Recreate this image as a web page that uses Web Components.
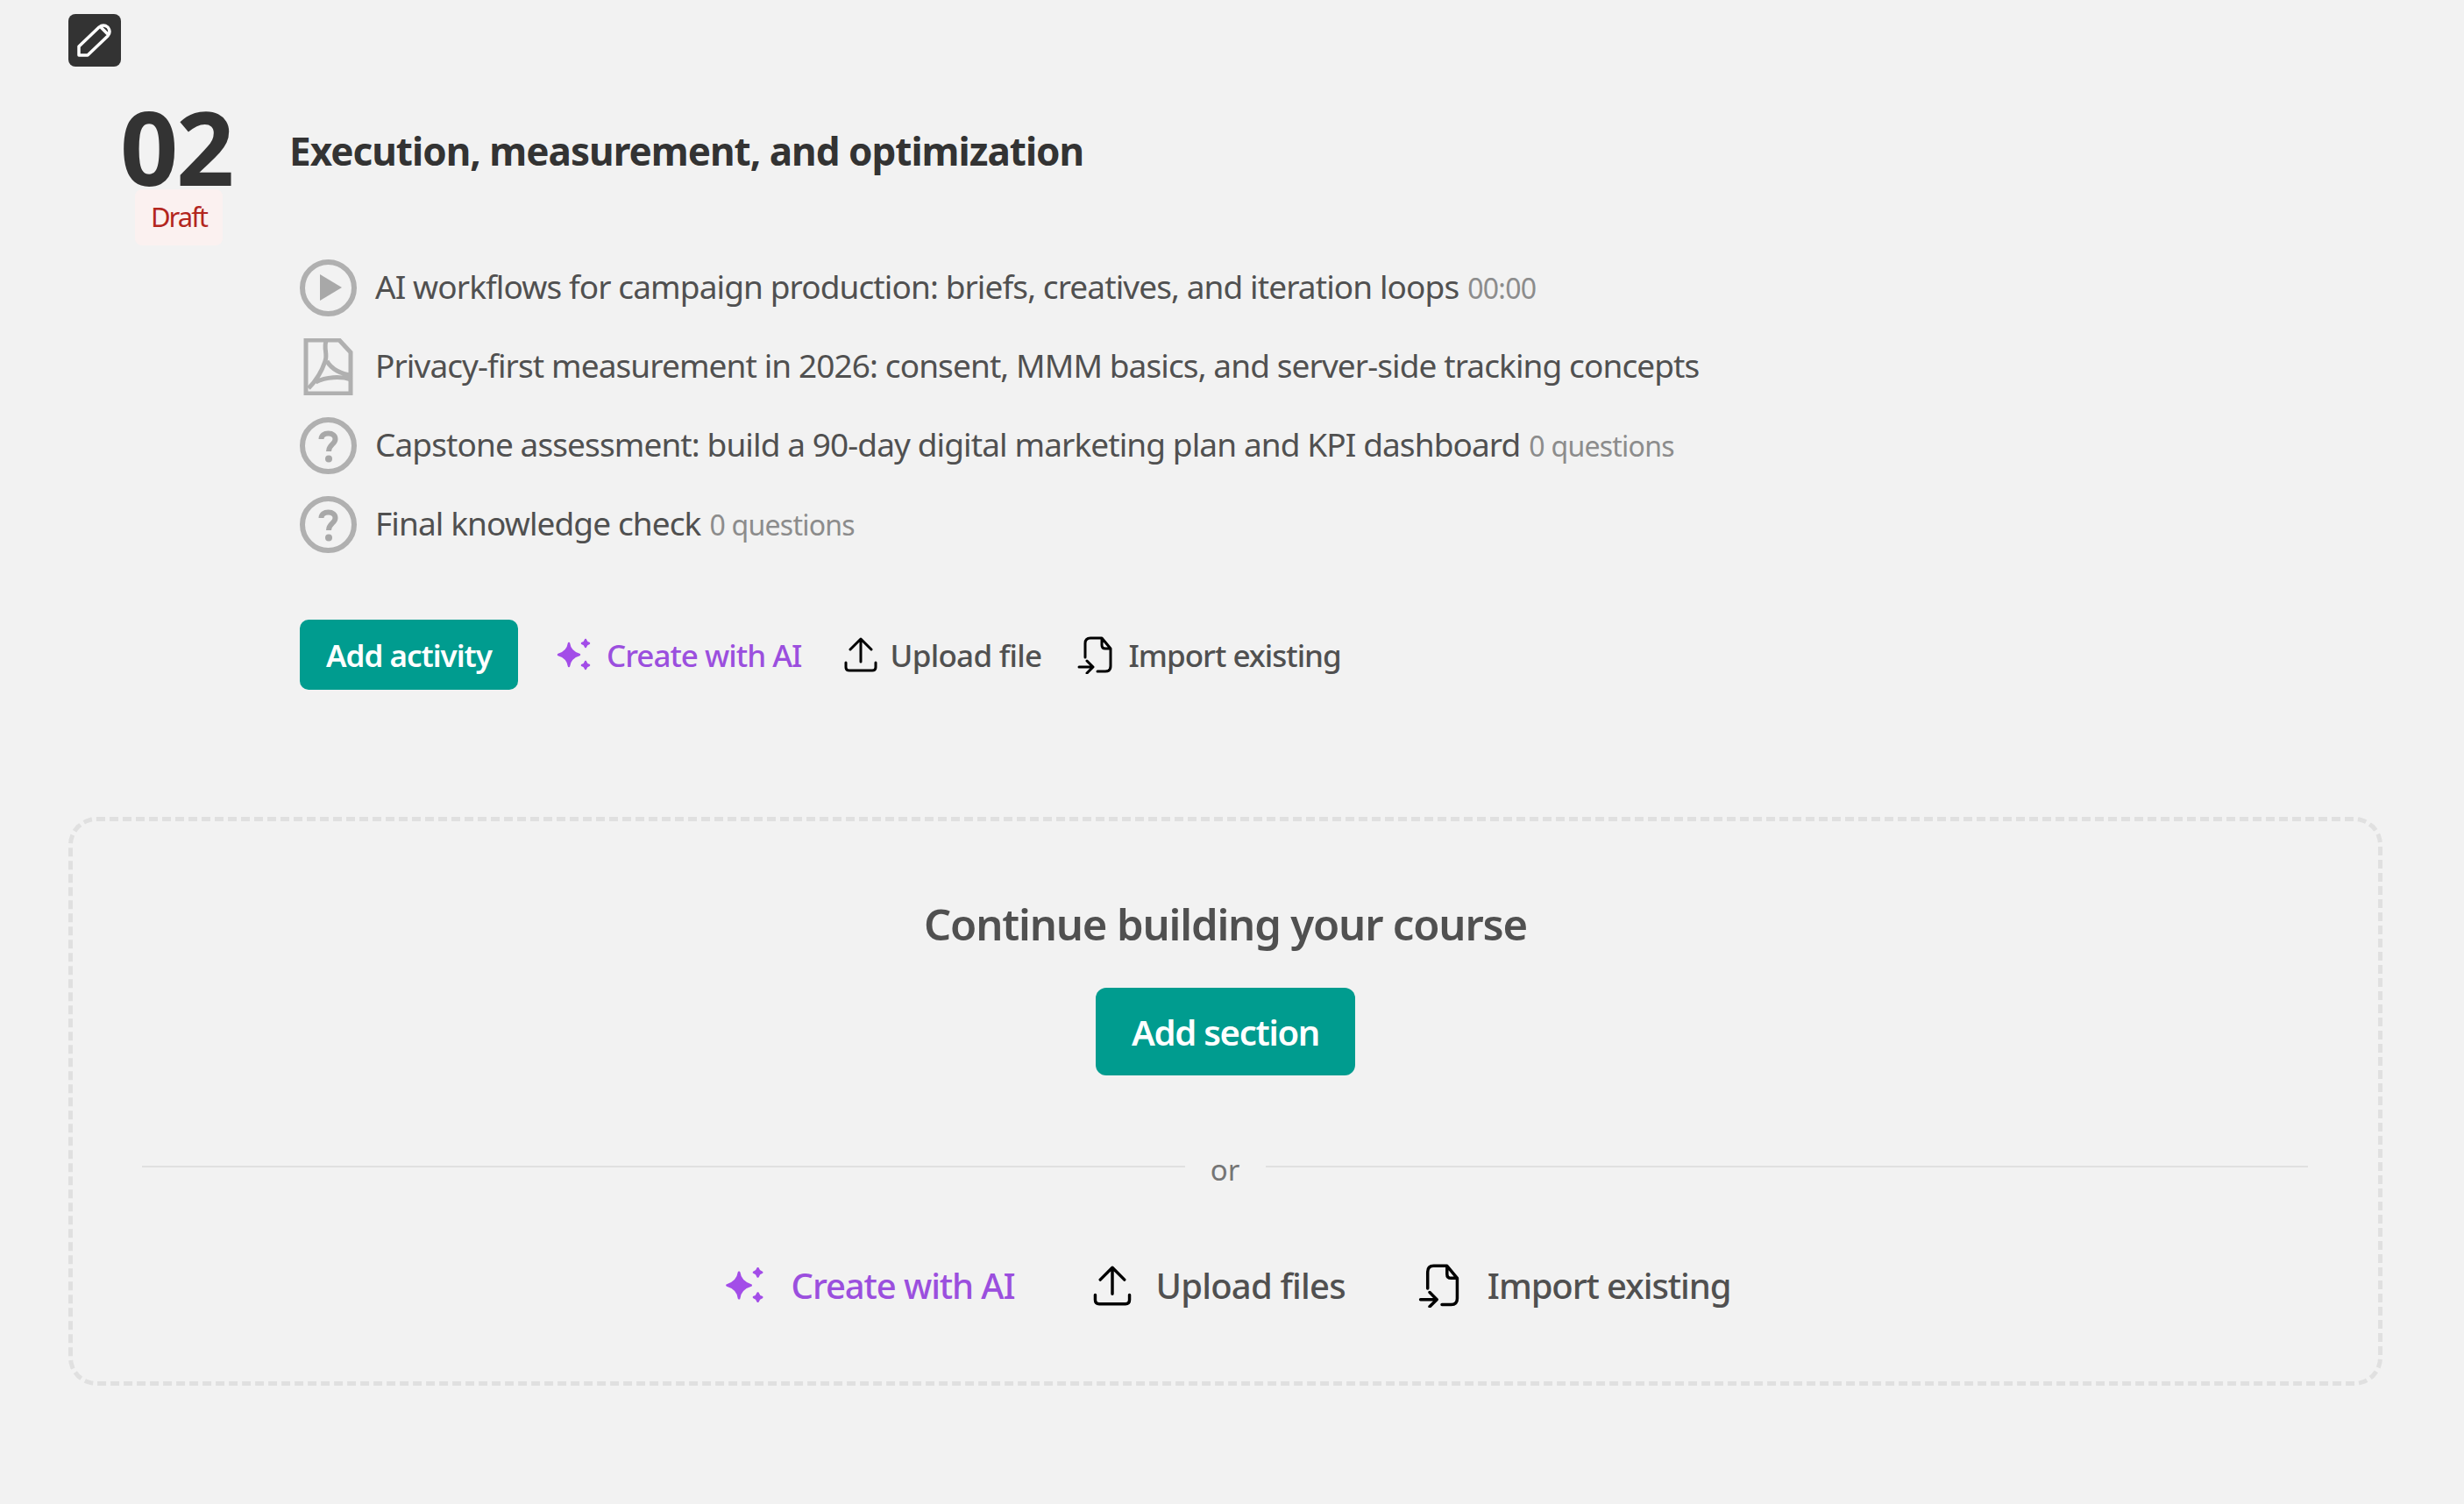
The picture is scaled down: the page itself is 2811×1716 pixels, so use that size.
<!DOCTYPE html>
<html lang="en">
<head>
<meta charset="utf-8">
<title>Course builder</title>
<style>
  html, body { margin: 0; height: 100%; background: #f2f2f2; overflow: hidden; }
  body { font-family: "Noto Sans", "Open Sans", sans-serif; color: #505050; }
</style>
</head>
<body>
<course-page>
  <course-section number="02" status="Draft" heading="Execution, measurement, and optimization">
    <activity-row icon="play" meta="00:00" >AI workflows for campaign production: briefs, creatives, and iteration loops</activity-row>
    <activity-row icon="pdf">Privacy-first measurement in 2026: consent, MMM basics, and server-side tracking concepts</activity-row>
    <activity-row icon="quiz" meta="0 questions">Capstone assessment: build a 90-day digital marketing plan and KPI dashboard</activity-row>
    <activity-row icon="quiz" meta="0 questions">Final knowledge check</activity-row>
    <teal-button slot="actions">Add activity</teal-button>
    <action-link slot="actions" icon="spark" accent>Create with AI</action-link>
    <action-link slot="actions" icon="upload">Upload file</action-link>
    <action-link slot="actions" icon="import">Import existing</action-link>
  </course-section>
  <add-panel heading="Continue building your course">
    <teal-button large>Add section</teal-button>
    <action-link slot="actions" icon="spark" accent large>Create with AI</action-link>
    <action-link slot="actions" icon="upload" large>Upload files</action-link>
    <action-link slot="actions" icon="import" large>Import existing</action-link>
  </add-panel>
</course-page>

<script>
const ICONS = {
  play: `<svg viewBox="0 0 65 65" width="65" height="65"><circle cx="32.5" cy="32.5" r="29.5" fill="none" stroke="#b0b0b0" stroke-width="6"/><path d="M23 17 L48 32 L23 47 Z" fill="#a8a8a8"/></svg>`,
  pdf: `<svg viewBox="0 0 65 65" width="65" height="65"><path d="M7 2 H45 L58 16 V63 H7 Z" fill="none" stroke="#b0b0b0" stroke-width="5"/><path d="M30 3 C27 12 32 18 29 26 C25 38 19 48 10 57 M31 26 C36 35 47 41 59 42 M18 50 C30 44 46 43 59 47" fill="none" stroke="#b0b0b0" stroke-width="5"/></svg>`,
  quiz: `<svg viewBox="0 0 65 65" width="65" height="65"><circle cx="32.5" cy="32.5" r="29.5" fill="none" stroke="#b0b0b0" stroke-width="6"/><path d="M24.5 25 C24.5 20.5 28 18.5 32.5 18.5 C37.5 18.5 40.5 21 40.5 25 C40.5 31 33 31 33 39" fill="none" stroke="#a8a8a8" stroke-width="6"/><circle cx="33" cy="47.5" r="4" fill="#a8a8a8"/></svg>`,
  spark: `<svg viewBox="0 0 44 38" width="100%" height="100%"><g fill="#a34de8" stroke="#a34de8" stroke-width="2.4" stroke-linejoin="round"><path d="M15 6 C15.8 12 18.5 16.5 27 19 C18.5 21.5 15.8 26 15 32 C14.2 26 11.5 21.5 3 19 C11.5 16.5 14.2 12 15 6 Z"/><path d="M34 2 C34.5 4 36 5.5 38 6 C36 6.5 34.5 8 34 10 C33.5 8 32 6.5 30 6 C32 5.5 33.5 4 34 2 Z"/><path d="M34 27 C34.5 29 36 30.5 38 31 C36 31.5 34.5 33 34 35 C33.5 33 32 31.5 30 31 C32 30.5 33.5 29 34 27 Z"/></g></svg>`,
  upload: `<svg viewBox="0 0 38 40" width="100%" height="100%"><path d="M19 28 V2 M7 14 L19 2 L31 14 M2 29 V34 Q2 38 6 38 H32 Q36 38 36 34 V29" fill="none" stroke="#000" stroke-width="3" stroke-linecap="round" stroke-linejoin="round"/></svg>`,
  import: `<svg viewBox="0 0 40 43" width="100%" height="100%"><path d="M9 24 V8 Q9 2 15 2 H28 L38 14 V34 Q38 40 32 40 H23 M28 3 V10 Q28 14 32 14 H38 M2 35 H17 M11 28 L18 35 L11 42" fill="none" stroke="#000" stroke-width="3" stroke-linecap="round" stroke-linejoin="round"/></svg>`
};

class CoursePage extends HTMLElement {
  constructor() {
    super();
    this.attachShadow({ mode: "open" });
    this.shadowRoot.innerHTML = `
      <style>
        :host { display: block; padding: 16px 93px 0 78px; }
        .edit { width: 60px; height: 60px; border-radius: 8px; background: #333; }
        svg { display: block; }
      </style>
      <div class="edit">
        <svg viewBox="0 0 60 60" width="60" height="60"><path d="M12 37 L35 15 Q40 11 45 15 Q49 20 45 25 L22 47 H12 Z M37 15 L45 23" fill="none" stroke="#fff" stroke-width="3.5" stroke-linejoin="round"/></svg>
      </div>
      <slot></slot>`;
  }
}

class CourseSection extends HTMLElement {
  constructor() {
    super();
    this.attachShadow({ mode: "open" });
    this.shadowRoot.innerHTML = `
      <style>
        :host { display: block; }
        header { display: flex; margin: 42px 0 0 46px; height: 165px; }
        .num { width: 160px; margin-right: 46px; display: flex; flex-direction: column; align-items: center; }
        .big { font-size: 116px; font-weight: 700; line-height: 98px; color: #333; height: 98px; letter-spacing: -2.4px; margin-right: 6px; }
        .draft { box-sizing: border-box; width: 100px; height: 64px; padding-bottom: 3px; border-radius: 8px; background: #fbf1f0; color: #b3261e; font-size: 31px; letter-spacing: -2px; display: grid; place-items: center; }
        h2 { margin: 22px 0 0; font-size: 44px; line-height: 64px; font-weight: 700; color: #333; letter-spacing: -.98px; }
        .rows { margin-left: 264px; }
        .actions { margin: 64px 0 0 264px; display: flex; align-items: center; height: 80px; }
      </style>
      <header>
        <div class="num"><div class="big"></div><div class="draft"></div></div>
        <h2></h2>
      </header>
      <div class="rows"><slot></slot></div>
      <div class="actions"><slot name="actions"></slot></div>`;
    this.shadowRoot.querySelector(".big").textContent = this.getAttribute("number");
    this.shadowRoot.querySelector(".draft").textContent = this.getAttribute("status");
    this.shadowRoot.querySelector("h2").textContent = this.getAttribute("heading");
  }
}

class ActivityRow extends HTMLElement {
  constructor() {
    super();
    this.attachShadow({ mode: "open" });
    const meta = this.getAttribute("meta");
    this.shadowRoot.innerHTML = `
      <style>
        :host { display: flex; align-items: center; height: 90px; font-size: 37px; color: #505050; letter-spacing: -.9px; }
        svg { display: block; margin-right: 21px; flex: none; }
        .txt { padding-bottom: 3px; }
        .meta { color: #8c8c8c; font-size: 32px; margin-left: 10px; letter-spacing: -.75px; }
      </style>
      ${ICONS[this.getAttribute("icon")]}
      <span class="txt"><slot></slot>${meta ? `<span class="meta">${meta}</span>` : ""}</span>`;
  }
}

class TealButton extends HTMLElement {
  constructor() {
    super();
    this.attachShadow({ mode: "open" });
    this.shadowRoot.innerHTML = `
      <style>
        :host { display: inline-flex; align-items: center; justify-content: center; width: 249px; height: 80px; border-radius: 10px; background: #009c8f; color: #fff; font-size: 35px; font-weight: 600; letter-spacing: -1px; }
        :host([large]) { width: 296px; height: 100px; border-radius: 12px; font-size: 40px; letter-spacing: -1.3px; }
      </style>
      <slot></slot>`;
  }
}

class ActionLink extends HTMLElement {
  constructor() {
    super();
    this.attachShadow({ mode: "open" });
    this.shadowRoot.innerHTML = `
      <style>
        :host { display: inline-flex; align-items: center; font-size: 35px; font-weight: 500; color: #505050; letter-spacing: -1px; }
        :host([accent]) { color: #9b4fde; }
        .ic { flex: none; display: block; }
        :host([icon=spark]) { margin-left: 43px; }
        :host([icon=spark]) .ic { width: 44px; height: 38px; margin-right: 14px; }
        :host([icon=upload]) { margin-left: 48px; letter-spacing: -.7px; }
        :host([icon=upload]) .ic { width: 38px; height: 40px; margin-right: 15px; }
        :host([icon=import]) { margin-left: 41px; }
        :host([icon=import]) .ic { width: 40px; height: 43px; margin-right: 18px; }
        :host([large]) { font-size: 40px; letter-spacing: -1.1px; }
        :host([large][icon=spark]) { margin-left: 0; }
        :host([large][icon=spark]) .ic { width: 50px; height: 43px; margin-right: 27px; }
        :host([large][icon=upload]) { margin-left: 89px; letter-spacing: -.8px; }
        :host([large][icon=upload]) .ic { width: 44px; height: 46px; margin-right: 28px; }
        :host([large][icon=import]) { margin-left: 83px; }
        :host([large][icon=import]) .ic { width: 47px; height: 50px; margin-right: 32px; }
      </style>
      <span class="ic">${ICONS[this.getAttribute("icon")]}</span>
      <slot></slot>`;
  }
}

class AddPanel extends HTMLElement {
  constructor() {
    super();
    this.attachShadow({ mode: "open" });
    this.shadowRoot.innerHTML = `
      <style>
        :host { display: flex; flex-direction: column; align-items: center; box-sizing: border-box; height: 649px; margin-top: 145px; padding-top: 82px; border: 5px dashed #e0e0e0; border-radius: 32px; }
        h3 { margin: 0 0 38px; font-size: 49px; line-height: 70px; font-weight: 600; color: #505050; letter-spacing: -1.17px; }
        .or { align-self: stretch; margin: 79px 80px 0 79px; height: 50px; display: flex; align-items: flex-start; color: #757575; font-size: 33px; }
        .or i { flex: 1; height: 2px; background: #e0e0e0; margin-top: 24px; }
        .or span { width: 92px; text-align: center; line-height: 50px; margin-top: 4px; }
        .actions { display: flex; align-items: center; margin-top: 83px; padding-left: 4px; }
      </style>
      <h3></h3>
      <slot></slot>
      <div class="or"><i></i><span>or</span><i></i></div>
      <div class="actions"><slot name="actions"></slot></div>`;
    this.shadowRoot.querySelector("h3").textContent = this.getAttribute("heading");
  }
}

customElements.define("course-page", CoursePage);
customElements.define("course-section", CourseSection);
customElements.define("activity-row", ActivityRow);
customElements.define("teal-button", TealButton);
customElements.define("action-link", ActionLink);
customElements.define("add-panel", AddPanel);
</script>
</body>
</html>
